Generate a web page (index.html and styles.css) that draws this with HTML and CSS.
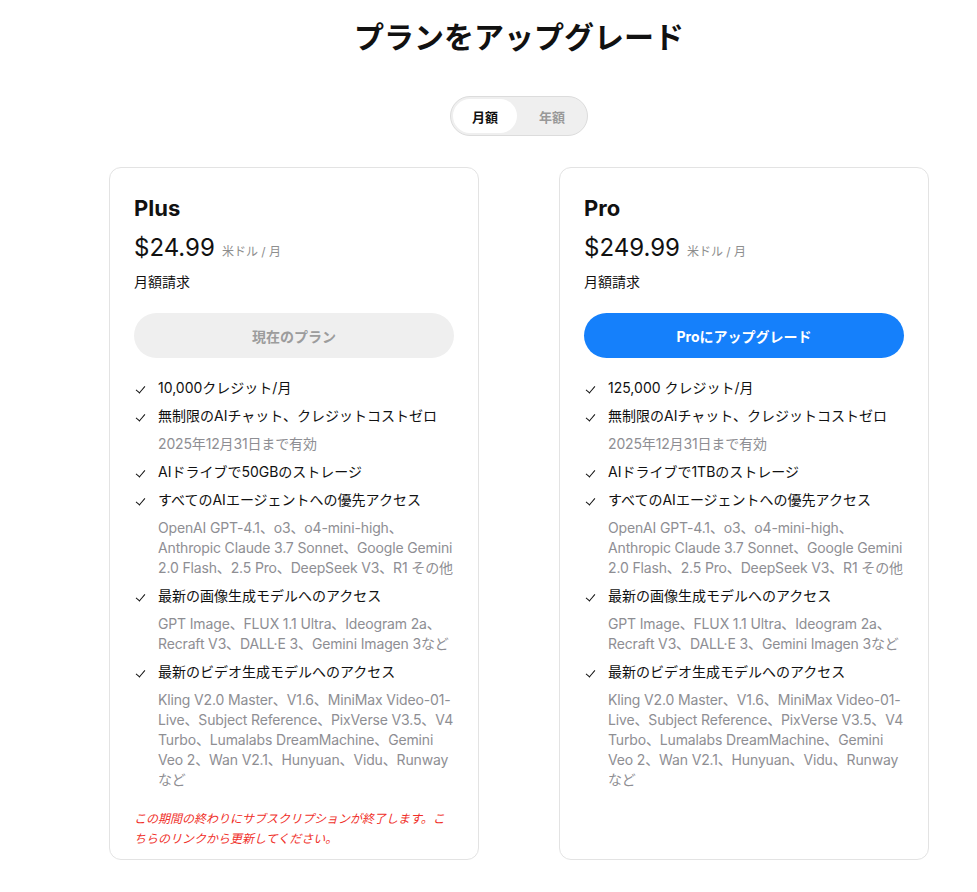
FILE: index.html
```html
<!DOCTYPE html>
<html lang="ja">
<head>
    <meta charset="UTF-8">
    <meta name="viewport" content="width=device-width, initial-scale=1.0">
    <title>プランをアップグレード</title>
    <link rel="stylesheet" href="styles.css">
</head>
<body>

<div class="page">
    <h1 class="title">プランをアップグレード</h1>

    <!-- 月額 / 年額 切り替え -->
    <div class="toggle">
        <button class="toggle-btn active">月額</button>
        <button class="toggle-btn">年額</button>
    </div>

    <div class="plans">
        <!-- Plus -->
        <div class="card">
            <h2 class="plan-name">Plus</h2>
            <div class="price"><span class="amount">$24.99</span><span class="unit">米ドル / 月</span></div>
            <div class="billing">月額請求</div>
            <button class="plan-btn current">現在のプラン</button>

            <ul class="features">
                <li class="item">10,000クレジット/月</li>
                <li class="item">無制限のAIチャット、クレジットコストゼロ</li>
                <li class="sub">2025年12月31日まで有効</li>
                <li class="item">AIドライブで50GBのストレージ</li>
                <li class="item">すべてのAIエージェントへの優先アクセス</li>
                <li class="sub">OpenAI GPT-4.1、o3、o4-mini-high、<br>Anthropic Claude 3.7 Sonnet、Google Gemini<br>2.0 Flash、2.5 Pro、DeepSeek V3、R1 その他</li>
                <li class="item">最新の画像生成モデルへのアクセス</li>
                <li class="sub">GPT Image、FLUX 1.1 Ultra、Ideogram 2a、<br>Recraft V3、DALL·E 3、Gemini Imagen 3など</li>
                <li class="item">最新のビデオ生成モデルへのアクセス</li>
                <li class="sub">Kling V2.0 Master、V1.6、MiniMax Video-01-<br>Live、Subject Reference、PixVerse V3.5、V4<br>Turbo、Lumalabs DreamMachine、Gemini<br>Veo 2、Wan V2.1、Hunyuan、Vidu、Runway<br>など</li>
            </ul>

            <p class="note">この期間の終わりにサブスクリプションが終了します。こちらのリンクから更新してください。</p>
        </div>

        <!-- Pro -->
        <div class="card">
            <h2 class="plan-name">Pro</h2>
            <div class="price"><span class="amount">$249.99</span><span class="unit">米ドル / 月</span></div>
            <div class="billing">月額請求</div>
            <button class="plan-btn upgrade">Proにアップグレード</button>

            <ul class="features">
                <li class="item">125,000 クレジット/月</li>
                <li class="item">無制限のAIチャット、クレジットコストゼロ</li>
                <li class="sub">2025年12月31日まで有効</li>
                <li class="item">AIドライブで1TBのストレージ</li>
                <li class="item">すべてのAIエージェントへの優先アクセス</li>
                <li class="sub">OpenAI GPT-4.1、o3、o4-mini-high、<br>Anthropic Claude 3.7 Sonnet、Google Gemini<br>2.0 Flash、2.5 Pro、DeepSeek V3、R1 その他</li>
                <li class="item">最新の画像生成モデルへのアクセス</li>
                <li class="sub">GPT Image、FLUX 1.1 Ultra、Ideogram 2a、<br>Recraft V3、DALL·E 3、Gemini Imagen 3など</li>
                <li class="item">最新のビデオ生成モデルへのアクセス</li>
                <li class="sub">Kling V2.0 Master、V1.6、MiniMax Video-01-<br>Live、Subject Reference、PixVerse V3.5、V4<br>Turbo、Lumalabs DreamMachine、Gemini<br>Veo 2、Wan V2.1、Hunyuan、Vidu、Runway<br>など</li>
            </ul>
        </div>
    </div>
</div>

</body>
</html>
```

FILE: styles.css
```css
body {
    margin: 0;
    padding: 0;
    background: #fff;
    color: #111;
    font-family: Inter, "Noto Sans CJK JP", sans-serif;
}

.page {
    padding: 17px 0 0 61px; /* 左側にサイドバー分の余白 */
}

.title {
    margin: 0;
    font-size: 30px;
    line-height: 40px;
    font-weight: 700;
    text-align: center;
    color: #111;
}

/* 切り替えボタン */
.toggle {
    display: flex;
    width: max-content;
    margin: 39px auto 0;
    padding: 2px;
    background: #efefef;
    border: 1px solid #dcdcdc;
    border-radius: 999px;
}

.toggle-btn {
    width: 66px;
    height: 34px;
    border: none;
    border-radius: 999px;
    background: transparent;
    font-family: inherit;
    font-size: 13px;
    font-weight: 700;
    color: #999;
}

.toggle-btn.active {
    width: 64px;
    margin-right: 2px;
    background: #fff;
    color: #111;
}

/* プランカード */
.plans {
    display: flex;
    justify-content: center;
    gap: 80px;
    margin-top: 31px;
}

.card {
    width: 370px;
    box-sizing: border-box;
    padding: 24px 24px 10px;
    border: 1px solid #e3e3e3;
    border-radius: 12px;
    display: flex;
    flex-direction: column;
}

.plan-name {
    margin: 0;
    font-size: 22px;
    line-height: 32px;
    font-weight: 700;
}

.price {
    margin-top: 8px;
    height: 32px;
    display: flex;
    align-items: baseline;
    line-height: 32px;
}

.amount {
    font-size: 24px;
    font-weight: 400;
}

.unit {
    margin-left: 7px;
    font-size: 12px;
    line-height: 16px;
    color: #8e8e8e;
}

.billing {
    margin-top: 8px;
    font-size: 14px;
    line-height: 20px;
}

.plan-btn {
    margin-top: 21px;
    width: 100%;
    height: 45px;
    border: none;
    border-radius: 999px;
    font-family: inherit;
    font-size: 14px;
    font-weight: 700;
}

.plan-btn.current {
    background: #efefef;
    color: #9c9c9c;
}

.plan-btn.upgrade {
    background: #1580fb;
    color: #fff;
}

.features {
    list-style: none;
    margin: 20px 0 0;
    padding: 0;
    font-size: 14px;
    line-height: 20px;
}

.features li {
    padding-left: 24px;
    margin-bottom: 8px;
    white-space: nowrap;
}

.features .item {
    position: relative;
}

/* チェックマーク */
.features .item::before {
    content: "";
    position: absolute;
    left: 4px;
    top: 6px;
    width: 4px;
    height: 8px;
    border-right: 1.3px solid #111;
    border-bottom: 1.3px solid #111;
    transform: rotate(40deg);
}

.features .sub {
    color: #8e8e93;
    letter-spacing: -0.15px;
}

.note {
    margin: 11px 0 0;
    font-size: 12px;
    line-height: 20px;
    font-style: italic;
    color: #f0302a;
}
```
